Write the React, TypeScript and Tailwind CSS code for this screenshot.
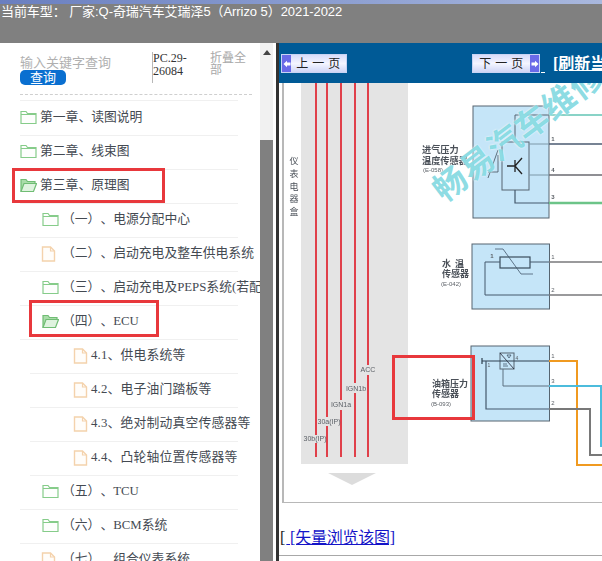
import React from "react";

const FONT = "[font-family:'Liberation_Serif','Noto_Sans_CJK_SC',serif]";

function FolderClosed() {
  return (
    <svg width="17" height="15" viewBox="0 0 17 15" className="shrink-0">
      <path d="M1 13.5V1.5h5l1.5 2H16v10z" fill="#fdfefd" stroke="#86cc8a" strokeWidth="1.2" />
      <path d="M1 4.5h15" stroke="#86cc8a" strokeWidth="1" />
    </svg>
  );
}

function FolderOpen() {
  return (
    <svg width="17" height="15" viewBox="0 0 17 15" className="shrink-0">
      <path d="M1 13.5V1.5h5l1.5 2H15v2" fill="#a9dca9" stroke="#70bd74" strokeWidth="1.2" />
      <path d="M1 13.5l3-8h12.5l-3 8z" fill="#dff3df" stroke="#70bd74" strokeWidth="1.2" />
    </svg>
  );
}

function FileIcon() {
  return (
    <svg width="15" height="16" viewBox="0 0 15 16" className="shrink-0">
      <path d="M1.5 1h8l4 4v10h-12z" fill="#fffdfa" stroke="#f4d2ac" strokeWidth="1.4" />
      <path d="M9.5 1v4h4" fill="none" stroke="#f4d2ac" strokeWidth="1.2" />
    </svg>
  );
}

type Item = { icon: "closed" | "open" | "file"; level: 1 | 2 | 3; text: string };

const items: Item[] = [
  { icon: "closed", level: 1, text: "第一章、读图说明" },
  { icon: "closed", level: 1, text: "第二章、线束图" },
  { icon: "open", level: 1, text: "第三章、原理图" },
  { icon: "closed", level: 2, text: "（一）、电源分配中心" },
  { icon: "file", level: 2, text: "（二）、启动充电及整车供电系统" },
  { icon: "closed", level: 2, text: "（三）、启动充电及PEPS系统(若配备)" },
  { icon: "open", level: 2, text: "（四）、ECU" },
  { icon: "file", level: 3, text: "4.1、供电系统等" },
  { icon: "file", level: 3, text: "4.2、电子油门踏板等" },
  { icon: "file", level: 3, text: "4.3、绝对制动真空传感器等" },
  { icon: "file", level: 3, text: "4.4、凸轮轴位置传感器等" },
  { icon: "closed", level: 2, text: "（五）、TCU" },
  { icon: "closed", level: 2, text: "（六）、BCM系统" },
  { icon: "file", level: 2, text: "（七）、组合仪表系统" },
];

function Row({ item }: { item: Item }) {
  const outer = item.level === 3 ? "ml-[30px] w-[208px]" : "ml-[20px] w-[218px]";
  const inner =
    item.level === 1
      ? "gap-[3px]"
      : item.level === 2
        ? item.icon === "file"
          ? "pl-[21px] gap-[6px]"
          : "pl-[22px] gap-[3px]"
        : "pl-[43px] gap-[3px]";
  return (
    <div className={`flex h-[34px] shrink-0 items-center border-b border-[#f0f0f0] pb-[2px] ${outer} ${inner}`}>
      {item.icon === "closed" && <FolderClosed />}
      {item.icon === "open" && <FolderOpen />}
      {item.icon === "file" && <FileIcon />}
      <span
        className={`whitespace-nowrap text-[12.8px] leading-none text-[#444a52] ${
          item.level === 3 ? "tracking-[0.2px]" : ""
        }`}
      >
        {item.text}
      </span>
    </div>
  );
}

function NavButton({ dir }: { dir: "prev" | "next" }) {
  const arrow = (
    <span className="flex h-full w-[9px] shrink-0 items-center justify-center bg-[#6a6ae8]">
      <svg width="8" height="8" viewBox="0 0 8 8">
        {dir === "prev" ? (
          <path d="M0.5 4L4 0.8V2.6H7.5V5.4H4V7.2z" fill="#fff" />
        ) : (
          <path d="M7.5 4L4 0.8V2.6H0.5V5.4H4V7.2z" fill="#fff" />
        )}
      </svg>
    </span>
  );
  return (
    <div
      className={`flex h-[19px] shrink-0 items-center overflow-hidden border border-[#c8d4f4] bg-gradient-to-b from-[#d8dcfa] via-[#f4f5ff] to-[#cfd6f6] ${
        dir === "prev" ? "w-[66px]" : "w-[68px]"
      }`}
    >
      {dir === "prev" && arrow}
      <span className="flex-1 whitespace-nowrap text-center text-[12px] leading-none tracking-[0.5px] text-[#222]">
        {dir === "prev" ? "上 一 页" : "下 一 页"}
      </span>
      {dir === "next" && arrow}
    </div>
  );
}

function Diagram() {
  const label = { fontFamily: "'Noto Sans CJK SC', sans-serif", fontWeight: 700, fill: "#4a5058" } as const;
  const small = { fontFamily: "'Liberation Sans', sans-serif", fill: "#5a5f65" } as const;
  return (
    <svg width="323" height="420" viewBox="279 83 323 420" className="blur-[0.35px]">
      <rect x="301" y="83" width="107" height="381" fill="#e4e4e4" />
      {[
        [316, 435, 443],
        [327, 417, 426],
        [341, 400, 410],
        [355, 383, 393],
        [368, 365, 375],
      ].map(([x, a, b]) => (
        <g key={x}>
          <line x1={x} x2={x} y1={83} y2={a} stroke="#e0404a" strokeWidth="2" />
          <line x1={x} x2={x} y1={b} y2={457} stroke="#e0404a" strokeWidth="2" />
        </g>
      ))}
      {[
        ["ACC", 368, 372],
        ["IGN1b", 356, 391],
        ["IGN1a", 341, 407],
        ["30a(IP)", 329, 424],
        ["30b(IP)", 315, 441],
      ].map(([t, x, y]) => (
        <text key={t as string} x={x as number} y={y as number} textAnchor="middle" fontSize="7" style={small}>
          {t}
        </text>
      ))}
      {["仪", "表", "电", "器", "盒"].map((c, i) => (
        <text key={c} x={294} y={164 + i * 12.8} textAnchor="middle" fontSize="9" style={{ ...label, fontWeight: 400 }}>
          {c}
        </text>
      ))}
      <polygon points="328,473 376,473 352,485" fill="#dcdcdc" />

      {/* Sensor 1 */}
      <text x="422" y="152.5" fontSize="9.2" style={label}>进气压力</text>
      <text x="422" y="163.5" fontSize="9.2" style={label}>温度传感器</text>
      <text x="423" y="172" fontSize="6" style={small}>(E-058)</text>
      <rect x="473" y="106" width="76" height="112" fill="#c5e5f8" stroke="#566470" strokeWidth="1" />
      <rect x="502" y="142" width="27" height="48" fill="#c5e5f8" stroke="#566470" strokeWidth="1" />
      <path d="M515 142V115H549" fill="none" stroke="#566470" />
      <path d="M515 190V203H549" fill="none" stroke="#44586c" strokeWidth="1.2" />
      <path d="M529 144H549" stroke="#7c98a8" />
      <path d="M529 175H549" stroke="#7c98a8" />
      <path d="M549 115H602" stroke="#62c4b4" strokeWidth="1.5" />
      <path d="M549 144H602" stroke="#4a5a70" strokeWidth="1.5" />
      <path d="M549 175H602" stroke="#6a6a70" strokeWidth="1.5" />
      <path d="M549 203H602" stroke="#6cc488" strokeWidth="2.5" />
      <path d="M515 160V172M507 166H515L522 158M515 166L522 174" fill="none" stroke="#222" strokeWidth="1.3" />
      <path d="M498 150L488 178M488 172H498V155" fill="none" stroke="#44505c" strokeWidth="0.8" />
      {[["2", 553, 113], ["1", 553, 141], ["4", 553, 172], ["3", 553, 199]].map(([t, x, y]) => (
        <text key={`a${t}`} x={x as number} y={y as number} textAnchor="middle" fontSize="6" fontWeight="700" style={small}>
          {t}
        </text>
      ))}

      {/* Sensor 2 */}
      <text x="442" y="267" fontSize="9" style={label} letterSpacing="4">水温</text>
      <text x="442" y="277" fontSize="9" style={label}>传感器</text>
      <text x="441" y="285.5" fontSize="6" style={small}>(E-042)</text>
      <rect x="472" y="244" width="77.5" height="65" fill="#c5e5f8" stroke="#566470" strokeWidth="1" />
      <rect x="500" y="257" width="30" height="11" fill="#c5e5f8" stroke="#3a4c5c" strokeWidth="1.2" />
      <path d="M500 262H485V295H549" fill="none" stroke="#44586c" />
      <path d="M530 262H549" stroke="#44586c" />
      <path d="M495 249L503 249L521 274H533" fill="none" stroke="#44586c" strokeWidth="0.8" />
      <path d="M549 262H602M549 295H602" stroke="#7a7a7c" strokeWidth="1.5" />
      <text x="492" y="258" fontSize="6" fontWeight="700" textAnchor="middle" style={small}>1</text>
      <text x="553" y="259" fontSize="6" textAnchor="middle" style={small}>1</text>
      <text x="553" y="292" fontSize="6" textAnchor="middle" style={small}>2</text>

      {/* Sensor 3 */}
      <rect x="471" y="346" width="78.5" height="75" fill="#c5e5f8" stroke="#566470" strokeWidth="1" />
      <text x="432" y="387" fontSize="9" style={label}>油箱压力</text>
      <text x="432" y="397" fontSize="9" style={label}>传感器</text>
      <text x="431" y="405.5" fontSize="6" style={small}>(B-093)</text>
      <rect x="500" y="353" width="14" height="16" fill="#c5e5f8" stroke="#566470" strokeWidth="1" />
      <path d="M500 353L514 369" stroke="#223" strokeWidth="0.8" />
      <path d="M507 355l4 0l-2 3zM503 364h4M503 366h5" fill="none" stroke="#34465a" strokeWidth="0.7" />
      <path d="M482 358V364M482 361H549" fill="none" stroke="#2e4050" strokeWidth="1.2" />
      <path d="M486 361V409H549" fill="none" stroke="#44586c" strokeWidth="1.2" />
      <path d="M503 369V386H549" fill="none" stroke="#5c7080" />
      <path d="M549 361H577V465H602" fill="none" stroke="#f09a20" strokeWidth="2" />
      <path d="M549 386H601V447" fill="none" stroke="#4cbcdc" strokeWidth="2" />
      <path d="M549 409H590V455H602" fill="none" stroke="#787878" strokeWidth="2" />
      <text x="553" y="358" fontSize="6" textAnchor="middle" style={small}>1</text>
      <text x="553" y="383" fontSize="6" textAnchor="middle" style={small}>3</text>
      <text x="553" y="405" fontSize="6" textAnchor="middle" style={small}>2</text>
      <text x="517" y="360" fontSize="5" textAnchor="middle" style={small}>4</text>
      <text x="489" y="367" fontSize="5" textAnchor="middle" style={small}>1</text>
    </svg>
  );
}

export default function App() {
  return (
    <div className={`relative flex h-[561px] w-[602px] flex-col overflow-hidden bg-white [text-spacing-trim:space-all] ${FONT}`}>
      {/* Top bar */}
      <div className="flex h-[43px] shrink-0 flex-col bg-[#808080]">
        <div className="h-[4px] bg-gradient-to-r from-[#6a7fc0] to-[#a9b8de]" />
        <div className="whitespace-nowrap pl-[1px] font-['Liberation_Sans','Noto_Sans_CJK_SC',sans-serif] text-[13px] leading-[16px] tracking-[-0.07px] text-white">
          当前车型：&nbsp;厂家:Q-奇瑞汽车艾瑞泽5（Arrizo 5）2021-2022
        </div>
      </div>

      <div className="flex min-h-0 flex-1">
        {/* Left panel */}
        <div className="flex w-[260px] shrink-0 flex-col overflow-hidden">
          <div className="ml-[20px] mt-[9px] flex h-[43px] w-[232px] shrink-0 border-b border-dashed border-[#cfcfcf]">
            <div className="w-[132px] shrink-0 pt-[3px]">
              <div className="text-[13px] leading-[15px] text-[#b0b0b0]">输入关键字查询</div>
              <div className="h-[15px] w-[46px] rounded-[5px] bg-[#0a6fd0] text-center text-[13px] leading-[15px] text-white">
                查询
              </div>
            </div>
            <div className="h-[31px] w-[58px] shrink-0 border-l border-[#b8b8b8] text-[12px] leading-[13px] text-[#333]">
              PC.29-
              <br />
              26084
            </div>
            <div className="w-[37px] text-[12px] leading-[12px] text-[#a8a8a8]">折叠全部</div>
          </div>
          <div className="ml-[20px] mt-[5px] h-[1px] w-[218px] shrink-0 bg-[#f0f0f0]" />
          <div className="mt-[1px] flex flex-col">
            {items.map((it) => (
              <Row key={it.text} item={it} />
            ))}
          </div>
        </div>

        {/* Scrollbar */}
        <div className="flex w-[13px] shrink-0 flex-col items-center bg-[#f1f1f1]">
          <div className="mt-[7px] h-0 w-0 border-x-[4px] border-b-[5px] border-x-transparent border-b-[#444]" />
          <div className="mt-[85px] w-full flex-1 bg-[#808080]" />
        </div>
        <div className="w-[3px] shrink-0 bg-white" />
        <div className="w-[3px] shrink-0 bg-[#333]" />

        {/* Right panel */}
        <div className="flex min-w-0 flex-1 flex-col overflow-hidden">
          <div className="flex h-[40px] shrink-0 items-start bg-[#005a96] pl-[2px] pt-[11px]">
            <NavButton dir="prev" />
            <div className="ml-[125px] shrink-0">
              <NavButton dir="next" />
            </div>
            <span className="ml-[1px] mt-[18px] h-[1px] w-[4px] shrink-0 bg-white" />
            <span className="ml-[8px] mt-[1px] shrink-0 whitespace-nowrap text-[16px] font-bold leading-[18px] text-white underline">
              [刷新当前页]
            </span>
          </div>
          <div className="relative ml-[3px] h-[420px] shrink-0 overflow-hidden border-b border-l-[2px] border-[#b8b8b8]">
            <div className="-ml-[5px]">
              <Diagram />
            </div>
            {/* Watermark */}
            <div className="pointer-events-none absolute left-[152px] top-[93px] origin-left -rotate-[37deg] whitespace-nowrap font-['Noto_Sans_CJK_SC',sans-serif] text-[33px] font-bold leading-none tracking-[1px] text-[#6fd3dc]/80 [text-shadow:0_0_2px_#fff]">
              畅易汽车维修
            </div>
          </div>
          <div className="mt-[25px] h-[28px] border-b border-[#a8a8a8] pl-[1px] text-[16px] leading-[20px] text-[#222]">
            [<a className="ml-[1px] tracking-[-0.25px] text-[#1414c8] underline"> [矢量浏览该图]</a>
          </div>
        </div>
      </div>

      {/* Red callouts */}
      <div className="pointer-events-none absolute left-[12px] top-[168px] h-[35px] w-[153px] border-[3px] border-[#e8383c]" />
      <div className="pointer-events-none absolute left-[29px] top-[300px] h-[37px] w-[130px] border-[3px] border-[#e8383c]" />
      <div className="pointer-events-none absolute left-[392px] top-[355px] h-[65px] w-[83px] border-[3px] border-[#e8383c]" />
    </div>
  );
}
